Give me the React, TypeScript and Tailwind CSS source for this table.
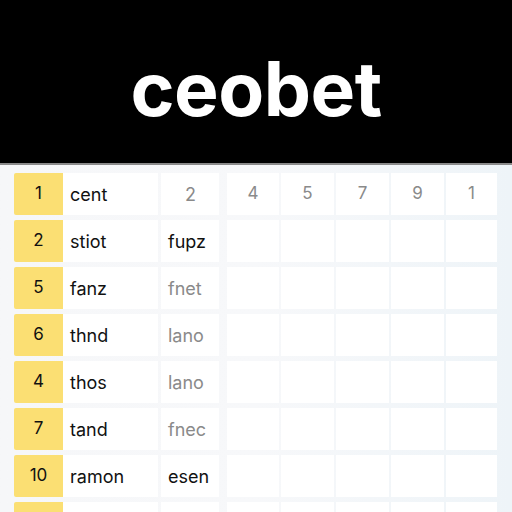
const rows = [
  { id: 'r1', n: '1', name: 'cent', c3: '2', c3Muted: true, header: true },
  { id: 'r2', n: '2', name: 'stiot', c3: 'fupz', c3Muted: false },
  { id: 'r3', n: '5', name: 'fanz', c3: 'fnet', c3Muted: true },
  { id: 'r4', n: '6', name: 'thnd', c3: 'lano', c3Muted: true },
  { id: 'r5', n: '4', name: 'thos', c3: 'lano', c3Muted: true },
  { id: 'r6', n: '7', name: 'tand', c3: 'fnec', c3Muted: true },
  { id: 'r7', n: '10', name: 'ramon', c3: 'esen', c3Muted: false },
  { id: 'r8', n: '', name: '', c3: '', c3Muted: false },
];

const headerNums = ['4', '5', '7', '9', '1'];
const restCols = ['w-[52px] ml-[8px]', 'w-[53px] ml-[2px]', 'w-[53px] ml-[2px]', 'w-[53px] ml-[2px]', 'w-[51px] ml-[2px]'];

export default function App() {
  return (
    <div
      className="w-[512px] h-[512px] overflow-hidden flex flex-col bg-[#f6f7f9]"
      style={{ fontFamily: 'Inter, "Liberation Sans", sans-serif' }}
    >
      <div className="h-[165px] shrink-0 bg-black border-b-2 border-[#8a8a8a] flex items-center justify-center">
        <span className="text-white font-bold text-[75px] leading-none tracking-[-0.5px] mt-[14px]">ceobet</span>
      </div>

      <div className="flex-1 flex bg-gradient-to-r from-[#f6f7f9] via-[#f7f8fa] to-[#eef4f8]">
        <div className="flex flex-col gap-[5px] pl-[14px] pt-[8px]">
          {rows.map((r) => (
            <div key={r.id} className="flex h-[42px] shrink-0">
              <div className="w-[49px] bg-[#fbdf73] rounded-l-[2px] flex items-center justify-center text-[17px] text-[#111]">
                {r.n}
              </div>
              <div className="w-[95px] bg-white flex items-center pl-[7px] text-[18px] text-[#111]">
                {r.name}
              </div>
              <div
                className={`w-[58px] ml-[3px] bg-white flex items-center text-[18px] ${
                  r.header ? 'justify-center pl-[1px]' : 'pl-[7px]'
                } ${r.c3Muted ? 'text-[#8a8a8a]' : 'text-[#111]'}`}
              >
                {r.c3}
              </div>
              {restCols.map((cls, i) => (
                <div
                  key={i}
                  className={`${cls} bg-white flex items-center justify-center text-[17px] text-[#8a8a8a]`}
                >
                  {r.header ? headerNums[i] : ''}
                </div>
              ))}
            </div>
          ))}
        </div>
      </div>
    </div>
  );
}
